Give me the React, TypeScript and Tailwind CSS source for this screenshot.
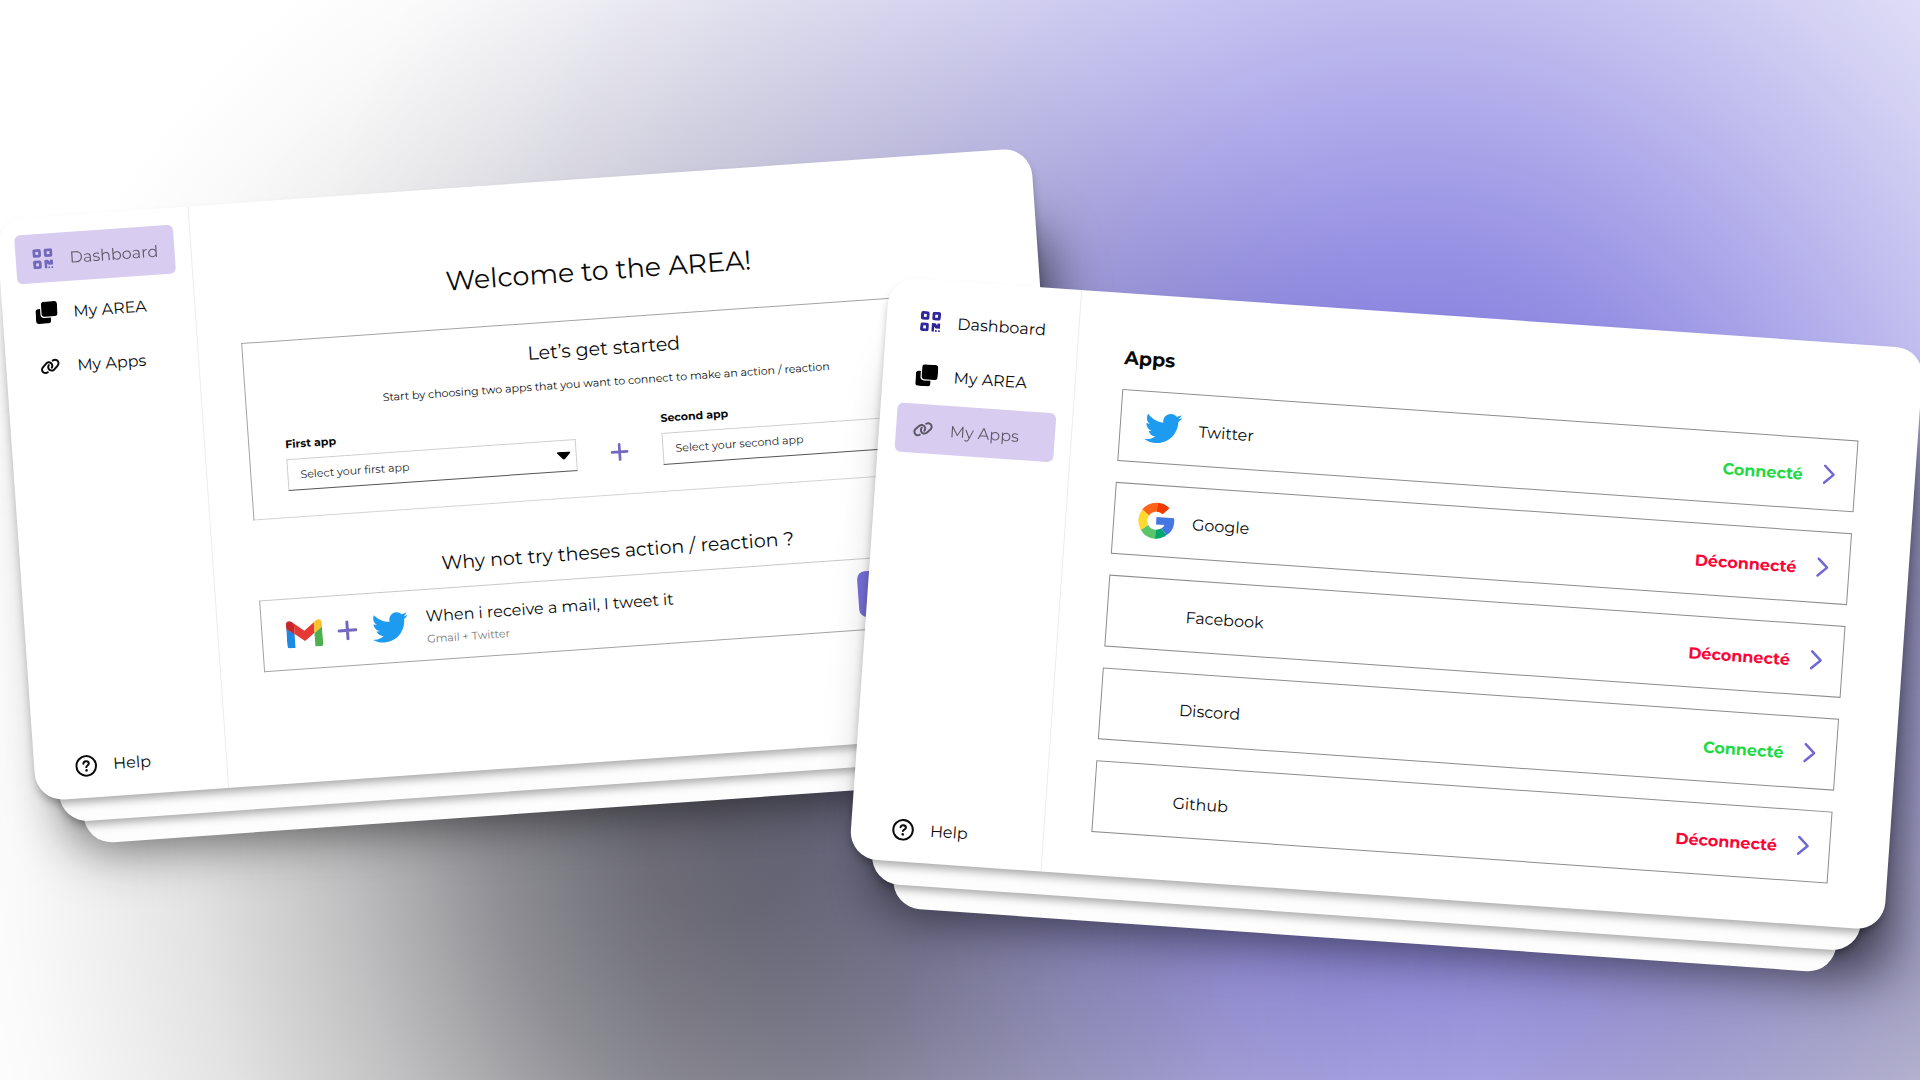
import React from "react";
import { FaTwitter } from "react-icons/fa";
import { FaLink } from "react-icons/fa6";

type Page = "Dashboard" | "My AREA" | "My Apps";

function DashboardIcon() {
  return (
    <svg viewBox="0 0 20 20" className="h-5 w-5 text-[#2f2799]" fill="currentColor" fillRule="evenodd" aria-hidden="true">
      <path d="M2 0h4.500a2 2 0 0 1 2 2v4.500a2 2 0 0 1-2 2h-4.500a2 2 0 0 1-2-2v-4.500a2 2 0 0 1 2-2zM3 2.800v3h2.800v-3z" />
      <path d="M13.500 0h4.500a2 2 0 0 1 2 2v4.500a2 2 0 0 1-2 2h-4.500a2 2 0 0 1-2-2v-4.500a2 2 0 0 1 2-2zM14.300 2.800v3h2.800v-3z" />
      <path d="M2 11.500h4.500a2 2 0 0 1 2 2v4.500a2 2 0 0 1-2 2h-4.500a2 2 0 0 1-2-2v-4.500a2 2 0 0 1 2-2zM3 14.300v3h2.800v-3z" />
      <path d="M11.500 11.500h3.500l2 2v-2h3v5h-4.500l-1.500-1.500v5h-2.500z" />
      <path d="M15 18.200h1.800v1.800h-1.800zM18.200 18.200h1.800v1.800h-1.800z" />
    </svg>
  );
}

function AreaIcon() {
  return (
    <svg viewBox="0 0 22 22" className="h-[22px] w-[22px]" fill="#000" aria-hidden="true">
      <path d="M9 0h10a3 3 0 0 1 3 3v9a3 3 0 0 1-3 3h-10a3 3 0 0 1-3-3v-9a3 3 0 0 1 3-3z" />
      <path d="M4.800 7h-1.800a3 3 0 0 0-3 3v9a3 3 0 0 0 3 3h9a3 3 0 0 0 3-3v-2.800h-6.500a3.700 3.700 0 0 1-3.700-3.700z" />
    </svg>
  );
}

function HelpIcon() {
  return (
    <svg viewBox="0 0 22 22" className="h-[22px] w-[22px]" fill="none" stroke="currentColor" strokeWidth="2" strokeLinecap="round" aria-hidden="true">
      <circle cx="11" cy="11" r="9.800" />
      <path d="M8.300 8.700c.2-1.500 1.300-2.300 2.700-2.300s2.700.9 2.700 2.300c0 1.900-2.700 1.900-2.700 3.500" />
      <circle cx="11" cy="15.500" r="1.300" fill="currentColor" stroke="none" />
    </svg>
  );
}

function PlusIcon({ className }: { className: string }) {
  return (
    <svg viewBox="0 0 20 20" className={className} fill="none" stroke="#7468be" strokeWidth="3" strokeLinecap="round" aria-hidden="true">
      <path d="M10 1.500v17M1.500 10h17" />
    </svg>
  );
}

function GmailLogo() {
  return (
    <svg viewBox="0 0 36 28" className="h-7 w-9" aria-hidden="true">
      <path fill="#1e88e5" d="M0 8l8 6v14h-5.500a2.500 2.500 0 0 1-2.500-2.500z" />
      <path fill="#4caf50" d="M36 8l-8 6v14h5.500a2.500 2.500 0 0 0 2.500-2.500z" />
      <path fill="#e53935" d="M8 3.500l10 7.800 10-7.800v10.500l-10 7.700-10-7.700z" />
      <path fill="#c62828" d="M0 4.200v4.300l8 6v-11l-2.500-2c-2.200-1.600-5.500-.4-5.500 2.700z" />
      <path fill="#fbc02d" d="M36 4.200v4.300l-8 6v-11l2.500-2c2.200-1.600 5.500-.4 5.500 2.700z" />
    </svg>
  );
}

function GoogleLogo() {
  return (
    <svg viewBox="0 0 40 40" className="h-[38px] w-[38px]" aria-hidden="true">
      <path fill="#ff6419" d="M4.500 9.200a19 19 0 0 1 15.500-8.200v9.500a9.500 9.500 0 0 0-8 4.500z" />
      <path fill="#f23a00" d="M20 1a19 19 0 0 1 13 5l-6.600 6.700a9.500 9.500 0 0 0-6.400-2.200z" />
      <path fill="#ffd92e" d="M4.500 9.200l7.500 5.800a9.500 9.500 0 0 0 0 10l-7.500 5.800a19 19 0 0 1 0-21.600z" />
      <path fill="#5bc468" d="M4.500 30.800l7.500-5.800a9.500 9.500 0 0 0 8 4.500v9.500a19 19 0 0 1-15.500-8.200z" />
      <path fill="#00a66c" d="M20 29.500c2.300 0 4.200-.6 5.700-1.600l6.300 6.300a19 19 0 0 1-12 4.800z" />
      <path fill="#4477e2" d="M20 16h18.600c.3 1.300.4 2.700.4 4.200 0 6.100-2.500 11-7 14l-6.300-6.300c1.500-1 2.700-2.300 3.200-3.900h-8.900z" />
    </svg>
  );
}

const pages: { name: Page; icon: React.ReactNode }[] = [
  { name: "Dashboard", icon: <DashboardIcon /> },
  { name: "My AREA", icon: <AreaIcon /> },
  { name: "My Apps", icon: <FaLink className="h-4 w-5" aria-hidden="true" /> },
];

function Sidebar({ active }: { active: Page }) {
  return (
    <nav className="flex w-[193px] shrink-0 flex-col justify-between border-r border-[#ececec] pt-[17px] pr-4 pb-5 pl-[17px]">
      <ul className="flex flex-col gap-[5px]">
        {pages.map(({ name, icon }) => (
          <li key={name}>
            <a
              href="#"
              aria-current={name === active ? "page" : undefined}
              className={
                "flex h-[49px] items-center gap-[15px] rounded-md pl-[15px] text-[16px] " +
                (name === active ? "bg-[#d8ccf0]" : "")
              }
            >
              <span className={"flex w-6 justify-center " + (name === active ? "opacity-60" : "")}>{icon}</span>
              <span className={"pt-0.5 " + (name === active ? "opacity-60" : "")}>{name}</span>
            </a>
          </li>
        ))}
      </ul>
      <a href="#" className="flex items-center gap-4 pl-6 text-[16px]">
        <HelpIcon />
        Help
      </a>
    </nav>
  );
}

function Stack({ className, children }: { className: string; children: React.ReactNode }) {
  return (
    <div className={"absolute aspect-video w-[54%] " + className}>
      <div className="absolute top-20 -right-2 -bottom-12 left-8 rounded-[40px] bg-black/65 blur-[28px]" />
      <div className="absolute inset-x-[46px] top-[46px] -bottom-[46px] rounded-[28px] bg-[#fdfdfd]" />
      <div className="absolute inset-x-[23px] top-[23px] -bottom-[23px] rounded-[28px] bg-[#fdfdfd] shadow-[0_6px_10px_-2px_rgba(0,0,0,0.35)]" />
      <div className="relative h-full rounded-[28px] bg-white shadow-[0_6px_10px_-2px_rgba(0,0,0,0.35)]">
        <div className="flex h-full overflow-hidden rounded-[28px]">{children}</div>
      </div>
    </div>
  );
}

function AppSelect({ id, label, placeholder }: { id: string; label: string; placeholder: string }) {
  return (
    <div className="flex w-[290px] flex-col gap-[5px]">
      <label htmlFor={id} className="text-[11px] leading-5 font-bold">
        {label}
      </label>
      <div className="relative">
        <select
          id={id}
          className="h-8 w-full appearance-none border border-[#cfcfcf] border-b-[#555] bg-white pl-3 text-[11px] text-[#222]"
        >
          <option>{placeholder}</option>
        </select>
        <svg viewBox="0 0 14 8" className="pointer-events-none absolute top-3 right-[6px] h-2 w-[14px]" aria-hidden="true">
          <path d="M1 0h12q1.300.3.600 1.300l-5.600 6q-1 .9-2 0l-5.600-6q-.7-1 .6-1.300z" />
        </svg>
      </div>
    </div>
  );
}

function DashboardWindow() {
  return (
    <Stack className="top-[183px] left-[15px] -rotate-4">
      <Sidebar active="Dashboard" />
      <main className="flex min-w-0 grow flex-col pt-[73px] pr-[78px] pl-[43px]">
        <h1 className="text-center text-[27px] leading-10">Welcome to the AREA!</h1>
        <section className="mt-[27px] h-[178px] border border-[#a3a3a3] border-b-[#d4d4d4] pt-4 pl-9">
          <h2 className="pr-9 text-center text-[19px] leading-7">Let’s get started</h2>
          <p className="mt-[7px] pr-9 text-center text-[11px] leading-6">
            Start by choosing two apps that you want to connect to make an action / reaction
          </p>
          <div className="mt-[18px] flex items-end gap-[34px]">
            <AppSelect id="first-app" label="First app" placeholder="Select your first app" />
            <PlusIcon className="mb-[7px] h-[18px] w-[18px] shrink-0" />
            <AppSelect id="second-app" label="Second app" placeholder="Select your second app" />
          </div>
        </section>
        <h2 className="mt-[42px] text-center text-[19px] leading-7">Why not try theses action / reaction ?</h2>
        <section className="mt-[10px] flex h-[72px] items-center border border-[#a3a3a3] border-t-[#c8c8c8] pr-6 pl-6">
          <GmailLogo />
          <PlusIcon className="mx-[15px] h-5 w-5" />
          <FaTwitter className="h-9 w-9 text-[#1d9bf0]" aria-hidden="true" />
          <div className="ml-[18px] grow pt-[3px]">
            <h3 className="text-[16px] leading-6">When i receive a mail, I tweet it</h3>
            <p className="text-[11px] leading-5 text-[#777]">Gmail + Twitter</p>
          </div>
          <button type="button" aria-label="Use this action" className="h-[46px] w-[100px] rounded-lg bg-[#766ed8]" />
        </section>
      </main>
    </Stack>
  );
}

const apps: { name: string; logo?: React.ReactNode; connected: boolean }[] = [
  { name: "Twitter", logo: <FaTwitter className="h-[37px] w-[37px] text-[#1d9bf0]" aria-hidden="true" />, connected: true },
  { name: "Google", logo: <GoogleLogo />, connected: false },
  { name: "Facebook", connected: false },
  { name: "Discord", connected: true },
  { name: "Github", connected: false },
];

function AppsWindow() {
  return (
    <Stack className="top-[312px] right-[15px] rotate-4">
      <Sidebar active="My Apps" />
      <main className="flex min-w-0 grow flex-col pt-[51px] pr-[59px] pl-[47px]">
        <h1 className="text-[19px] leading-7 font-bold">Apps</h1>
        <ul className="mt-[17px] flex flex-col gap-[21px]">
          {apps.map(({ name, logo, connected }) => (
            <li key={name}>
              <button type="button" className="flex h-[72px] w-full items-center border border-[#8c8c8c] pr-5 pl-[23px] text-left text-[16px]">
                <span className="flex w-[38px] justify-center">{logo}</span>
                <span className="ml-[17px] grow pt-1">{name}</span>
                <span className={"pt-[3px] font-bold " + (connected ? "text-[#23d943]" : "text-[#fa0537]")}>
                  {connected ? "Connecté" : "Déconnecté"}
                </span>
                <svg viewBox="0 0 12 20" className="ml-5 h-5 w-3" fill="none" stroke="#7068d8" strokeWidth="2.500" strokeLinecap="round" strokeLinejoin="round" aria-hidden="true">
                  <path d="M1.500 1.500l9 8.500-9 8.500" />
                </svg>
              </button>
            </li>
          ))}
        </ul>
      </main>
    </Stack>
  );
}

export default function App() {
  return (
    <div className="relative min-h-screen overflow-hidden bg-white font-['Montserrat','Inter',sans-serif] text-[#0a0a0a]">
      <div className="absolute inset-0 bg-[radial-gradient(ellipse_35%_45%_at_100%_90%,rgba(0,0,0,0.2)_0%,rgba(0,0,0,0.12)_38%,rgba(0,0,0,0.05)_67%,rgba(0,0,0,0)_100%),radial-gradient(ellipse_41%_91%_at_37.5%_76%,rgba(0,0,0,0.54)_0%,rgba(0,0,0,0.52)_10%,rgba(0,0,0,0.475)_19%,rgba(0,0,0,0.41)_29%,rgba(0,0,0,0.33)_38%,rgba(0,0,0,0.245)_48%,rgba(0,0,0,0.175)_58%,rgba(0,0,0,0.115)_67%,rgba(0,0,0,0.07)_77%,rgba(0,0,0,0.025)_89%,rgba(0,0,0,0)_100%),radial-gradient(ellipse_60%_116%_at_73.5%_56%,rgba(118,110,219,1)_0%,rgba(118,110,219,0.97)_10%,rgba(118,110,219,0.88)_19%,rgba(118,110,219,0.75)_29%,rgba(118,110,219,0.61)_38%,rgba(118,110,219,0.46)_48%,rgba(118,110,219,0.32)_58%,rgba(118,110,219,0.22)_67%,rgba(118,110,219,0.13)_77%,rgba(118,110,219,0.04)_89%,rgba(118,110,219,0)_100%)]" />
      <DashboardWindow />
      <AppsWindow />
    </div>
  );
}
